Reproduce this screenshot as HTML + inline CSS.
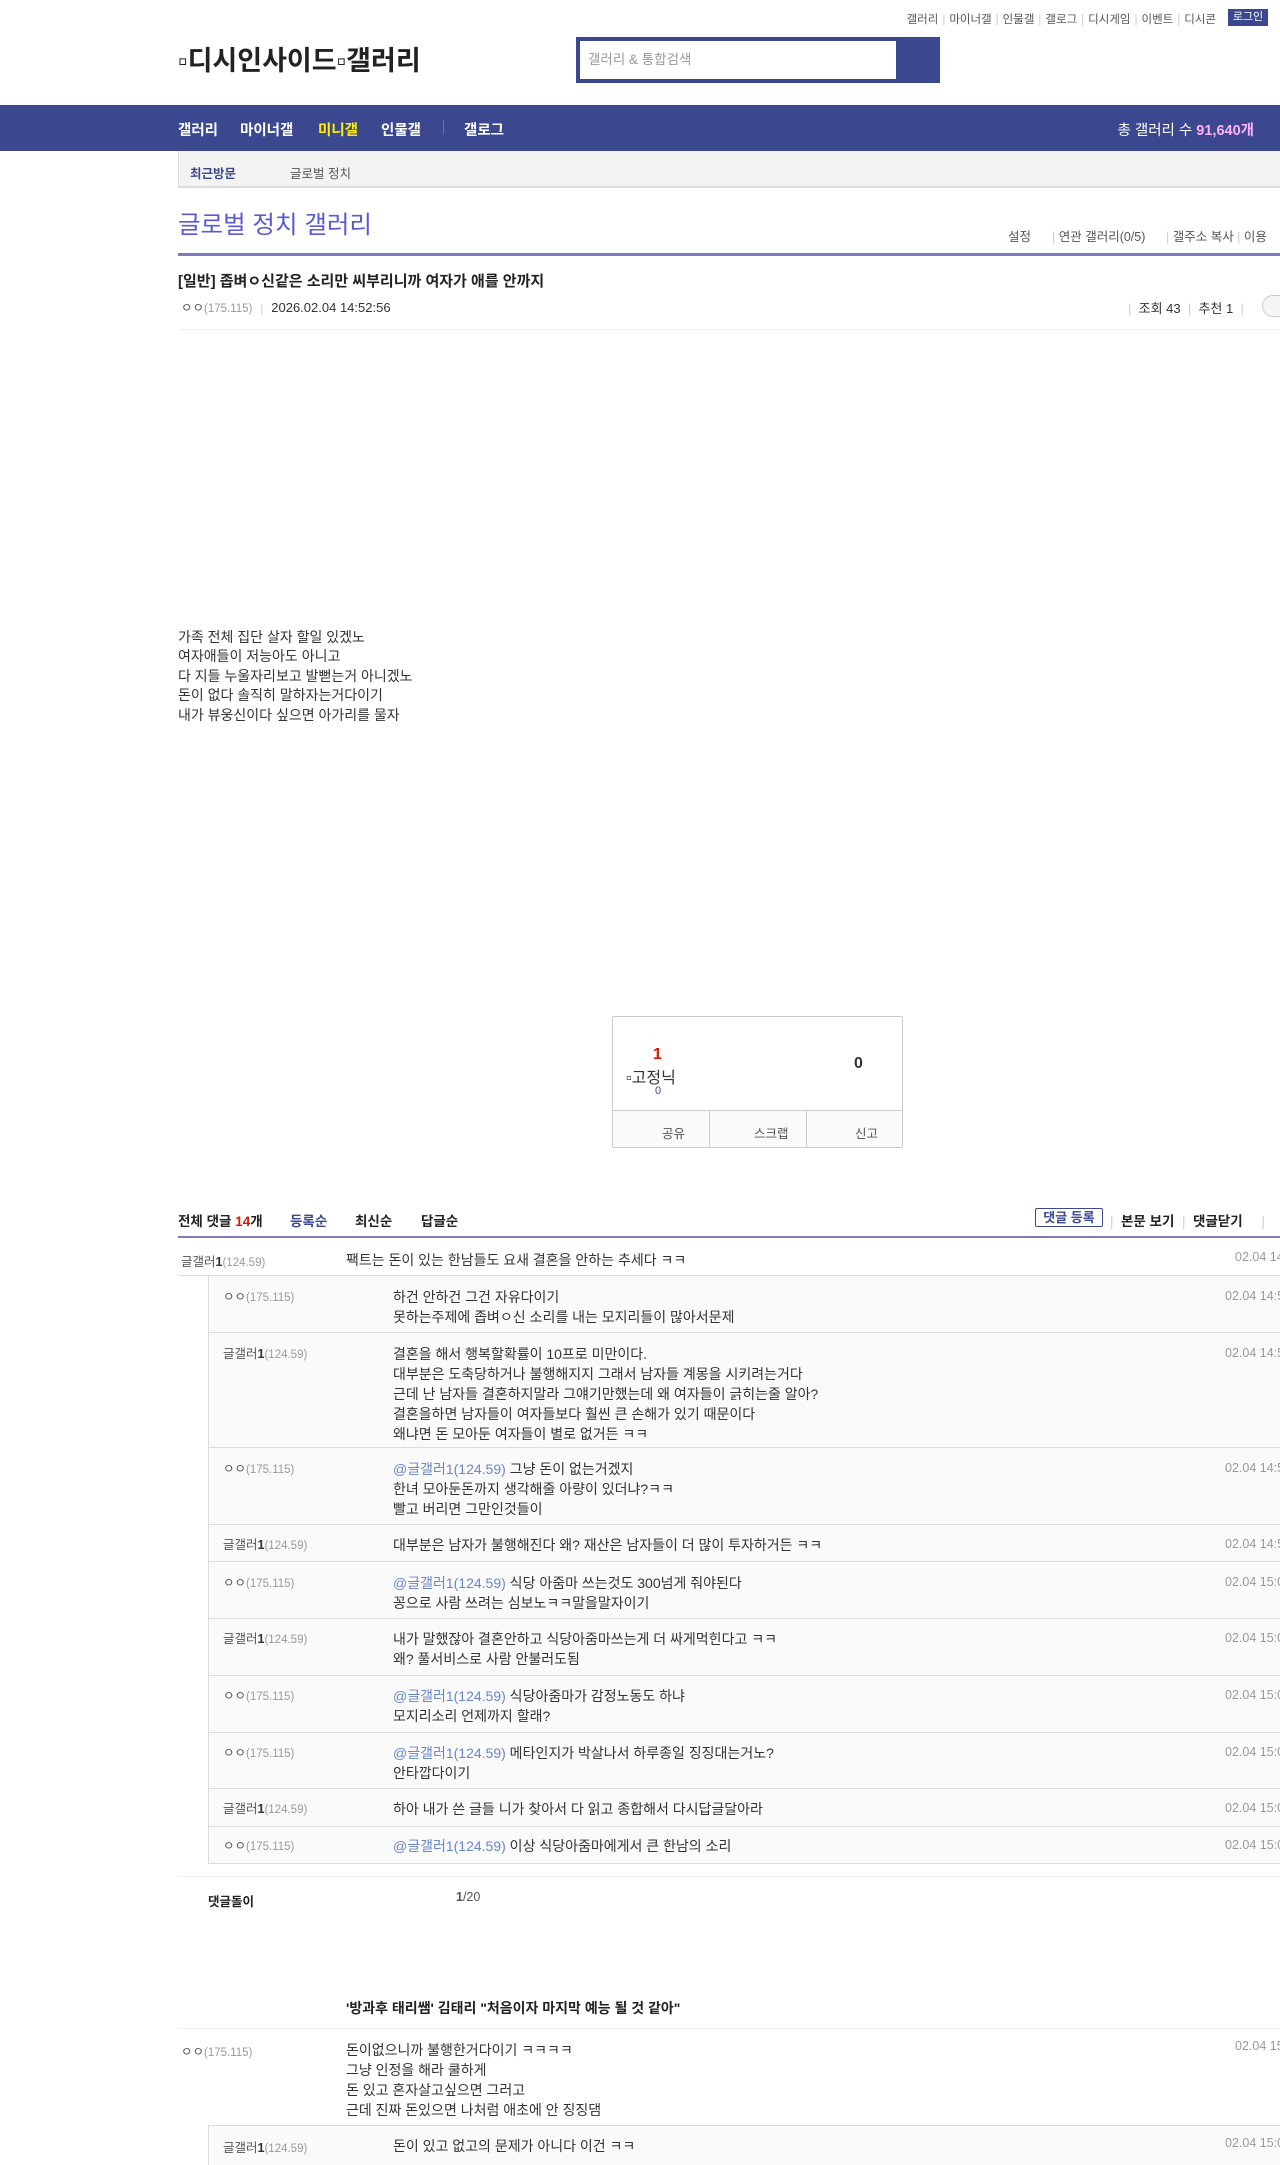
<!DOCTYPE html>
<html><head><meta charset="utf-8"><style>
*{margin:0;padding:0;box-sizing:border-box}
body{width:1280px;height:2158px;overflow:hidden;position:relative;background:#fff;font-family:"Liberation Sans","Noto Sans CJK KR",sans-serif;color:#333;font-size:14px}
.a{position:absolute;white-space:nowrap}
.top{top:11px;font-size:11.5px;color:#555}
.top span.s{color:#ccc;margin:0 4px}
.nav{top:105px;left:0;width:1280px;height:46px;background:#3b4890}
.nav .a{top:14px;font-size:14.5px;font-weight:bold;color:#fff}
.nick{font-size:12.5px;color:#555}
.nick i{font-style:normal;font-size:11.5px;color:#999}
.dt{font-size:12.5px;color:#999}
.rep{position:absolute;left:208px;width:1100px;background:#fafafa;border-top:1px solid #ddd}
.at{color:#6a86c8}
.c{font-size:14px}
</style></head><body>
<div class="a top" style="right:64px">갤러리<span class="s">|</span>마이너갤<span class="s">|</span>인물갤<span class="s">|</span>갤로그<span class="s">|</span>디시게임<span class="s">|</span>이벤트<span class="s">|</span>디시콘</div>
<div class="a" style="left:1228px;top:9px;width:40px;height:17px;background:#3b4890;color:#fff;font-size:11px;text-align:center;line-height:17px">로그인</div>
<div class="a" style="left:178px;top:39px;font-size:27px;font-weight:bold;color:#222">▫디시인사이드▫갤러리</div>
<div class="a" style="left:576px;top:37px;width:364px;height:46px;background:#3b4890"><div style="position:absolute;left:4px;top:4px;width:316px;height:38px;background:#fff;color:#999;font-size:13.5px;line-height:38px;padding-left:8px">갤러리 &amp; 통합검색</div></div>
<div class="a nav">
<div class="a" style="left:178px">갤러리</div><div class="a" style="left:240px">마이너갤</div><div class="a" style="left:318px;color:#fff000">미니갤</div><div class="a" style="left:381px">인물갤</div><div class="a" style="left:443px;top:15px;width:1px;height:14px;background:#6670b0"></div><div class="a" style="left:464px">갤로그</div>
<div class="a" style="right:26px;font-weight:normal;font-size:14.5px">총 갤러리 수 <b style="color:#ffb0ff">91,640개</b></div></div>
<div class="a" style="left:178px;top:151px;width:1102px;height:37px;background:#f3f3f3;border-left:1px solid #ddd;border-bottom:2px solid #ddd"></div>
<div class="a" style="left:190px;top:163px;font-size:12.5px;font-weight:bold;color:#3b4890">최근방문</div>
<div class="a" style="left:290px;top:163px;font-size:12.5px;color:#555">글로벌 정치</div>
<div class="a" style="left:178px;top:206px;font-size:24.5px;color:#5a5ad2">글로벌 정치 갤러리</div>
<div class="a" style="left:1008px;top:226px;font-size:12.5px;color:#555">설정</div>
<div class="a" style="left:1052px;top:226px;font-size:12.5px;color:#555"><span style="color:#ccc">|</span> 연관 갤러리(0/5)</div>
<div class="a" style="left:1166px;top:226px;font-size:12.5px;color:#555"><span style="color:#ccc">|</span> 갤주소 복사 <span style="color:#ccc">|</span> 이용</div>
<div class="a" style="left:178px;top:253px;width:1102px;height:3px;background:#7b7bc2"></div>
<div class="a" style="left:178px;top:270px;font-size:15px;font-weight:bold;color:#222">[일반] 좁벼ㅇ신같은 소리만 씨부리니까 여자가 애를 안까지</div>
<div class="a" style="left:181px;top:297px"><span class="nick">ㅇㅇ<i>(175.115)</i></span><span style="color:#ccc;margin:0 8px;font-size:11px">|</span><span style="font-size:13px;color:#333">2026.02.04 14:52:56</span></div>
<div class="a" style="left:1128px;top:298px;font-size:13px;color:#333"><span style="color:#ccc">|</span>&nbsp; 조회 43 &nbsp;<span style="color:#ccc">|</span>&nbsp; 추천 1 &nbsp;<span style="color:#ccc">|</span></div>
<div class="a" style="left:1262px;top:295px;width:30px;height:22px;border:1px solid #ccc;border-radius:11px;background:#f5f5f5"></div>
<div class="a" style="left:178px;top:329px;width:1102px;height:1px;background:#eee"></div>
<div class="a" style="left:178px;top:628px;font-size:14px;line-height:19.4px;color:#333">가족 전체 집단 살자 할일 있겠노<br>여자애들이 저능아도 아니고<br>다 지들 누울자리보고 발뻗는거 아니겠노<br>돈이 없다 솔직히 말하자는거다이기<br>내가 뷰웅신이다 싶으면 아가리를 물자</div>
<div class="a" style="left:612px;top:1016px;width:291px;height:132px;border:1px solid #ccc;border-radius:2px">
<div class="a" style="left:40px;top:29px;font-size:16px;font-weight:bold;color:#d31900">1</div>
<div class="a" style="left:13px;top:47px;font-size:16px;color:#333">▫고정닉</div>
<div class="a" style="left:42px;top:68px;font-size:11px;color:#3b4890">0</div>
<div class="a" style="left:241px;top:38px;font-size:16px;font-weight:bold;color:#333">0</div>
<div class="a" style="left:0;top:93px;width:289px;height:37px;background:#fafafa;border-top:1px solid #ccc"></div>
<div class="a" style="left:96px;top:94px;width:1px;height:36px;background:#ccc"></div>
<div class="a" style="left:193px;top:94px;width:1px;height:36px;background:#ccc"></div>
<div class="a" style="left:49px;top:106px;font-size:12.5px;color:#555">공유</div>
<div class="a" style="left:141px;top:106px;font-size:12.5px;color:#555">스크랩</div>
<div class="a" style="left:242px;top:106px;font-size:12.5px;color:#555">신고</div>
</div>
<div class="a" style="left:178px;top:1210px;font-size:13.5px;font-weight:bold;color:#222">전체 댓글 <span style="color:#d31900">14</span>개</div>
<div class="a" style="left:290px;top:1210px;font-size:13.5px;font-weight:bold;color:#3b4890">등록순</div>
<div class="a" style="left:355px;top:1210px;font-size:13.5px;font-weight:bold;color:#222">최신순</div>
<div class="a" style="left:421px;top:1210px;font-size:13.5px;font-weight:bold;color:#222">답글순</div>
<div class="a" style="left:1035px;top:1208px;width:68px;height:19px;border:1px solid #3b4890;border-radius:2px;font-size:13px;font-weight:bold;color:#3b4890;text-align:center;line-height:17px">댓글 등록</div>
<div class="a" style="left:1110px;top:1210px;font-size:13.5px;font-weight:bold;color:#222"><span style="color:#ccc;font-weight:normal">|</span>&nbsp; 본문 보기 &nbsp;<span style="color:#ccc;font-weight:normal">|</span>&nbsp; 댓글닫기 &nbsp;&nbsp;&nbsp;&nbsp;<span style="color:#ccc;font-weight:normal">|</span></div>
<div class="a" style="left:178px;top:1236px;width:1102px;height:2px;background:#7b7bc2"></div>

<div class="a nick" style="left:181px;top:1251px">글갤러<b style="color:#333">1</b><i>(124.59)</i></div>
<div class="a c" style="left:346px;top:1250px">팩트는 돈이 있는 한남들도 요새 결혼을 안하는 추세다 ㅋㅋ</div>
<div class="a dt" style="left:1235px;top:1250px">02.04 14:52:00</div>
<div class="a" style="left:178px;top:1275px;width:1102px;height:1px;background:#ddd"></div>

<div class="rep" style="top:1275px;height:588px;border-left:1px solid #ddd"></div>
<div class="a" style="left:208px;top:1332px;width:1072px;height:1px;background:#ddd"></div>
<div class="a" style="left:208px;top:1447px;width:1072px;height:1px;background:#ddd"></div>
<div class="a" style="left:208px;top:1524px;width:1072px;height:1px;background:#ddd"></div>
<div class="a" style="left:208px;top:1561px;width:1072px;height:1px;background:#ddd"></div>
<div class="a" style="left:208px;top:1618px;width:1072px;height:1px;background:#ddd"></div>
<div class="a" style="left:208px;top:1675px;width:1072px;height:1px;background:#ddd"></div>
<div class="a" style="left:208px;top:1732px;width:1072px;height:1px;background:#ddd"></div>
<div class="a" style="left:208px;top:1788px;width:1072px;height:1px;background:#ddd"></div>
<div class="a" style="left:208px;top:1826px;width:1072px;height:1px;background:#ddd"></div>
<div class="a" style="left:208px;top:1863px;width:1072px;height:1px;background:#ddd"></div>

<div style="position:absolute;left:0;top:2px;line-height:20px;font-size:14px">
<div class="a nick" style="left:223px;top:1285px">ㅇㅇ<i>(175.115)</i></div>
<div class="a" style="left:393px;top:1285px">하건 안하건 그건 자유다이기<br>못하는주제에 좁벼ㅇ신 소리를 내는 모지리들이 많아서문제</div>
<div class="a dt" style="left:1225px;top:1284px">02.04 14:53:00</div>

<div class="a nick" style="left:223px;top:1342px">글갤러<b style="color:#333">1</b><i>(124.59)</i></div>
<div class="a" style="left:393px;top:1342px">결혼을 해서 행복할확률이 10프로 미만이다.<br>대부분은 도축당하거나 불행해지지 그래서 남자들 계몽을 시키려는거다<br>근데 난 남자들 결혼하지말라 그얘기만했는데 왜 여자들이 긁히는줄 알아?<br>결혼을하면 남자들이 여자들보다 훨씬 큰 손해가 있기 때문이다<br>왜냐면 돈 모아둔 여자들이 별로 없거든 ㅋㅋ</div>
<div class="a dt" style="left:1225px;top:1341px">02.04 14:54:00</div>

<div class="a nick" style="left:223px;top:1457px">ㅇㅇ<i>(175.115)</i></div>
<div class="a" style="left:393px;top:1457px"><span class="at">@글갤러1(124.59)</span> 그냥 돈이 없는거겠지<br>한녀 모아둔돈까지 생각해줄 아량이 있더냐?ㅋㅋ<br>빨고 버리면 그만인것들이</div>
<div class="a dt" style="left:1225px;top:1456px">02.04 14:55:00</div>

<div class="a nick" style="left:223px;top:1533px">글갤러<b style="color:#333">1</b><i>(124.59)</i></div>
<div class="a" style="left:393px;top:1533px">대부분은 남자가 불행해진다 왜? 재산은 남자들이 더 많이 투자하거든 ㅋㅋ</div>
<div class="a dt" style="left:1225px;top:1532px">02.04 14:56:00</div>

<div class="a nick" style="left:223px;top:1571px">ㅇㅇ<i>(175.115)</i></div>
<div class="a" style="left:393px;top:1571px"><span class="at">@글갤러1(124.59)</span> 식당 아줌마 쓰는것도 300넘게 줘야된다<br>꽁으로 사람 쓰려는 심보노ㅋㅋ말을말자이기</div>
<div class="a dt" style="left:1225px;top:1570px">02.04 15:00:00</div>

<div class="a nick" style="left:223px;top:1627px">글갤러<b style="color:#333">1</b><i>(124.59)</i></div>
<div class="a" style="left:393px;top:1627px">내가 말했잖아 결혼안하고 식당아줌마쓰는게 더 싸게먹힌다고 ㅋㅋ<br>왜? 풀서비스로 사람 안불러도됨</div>
<div class="a dt" style="left:1225px;top:1626px">02.04 15:01:00</div>

<div class="a nick" style="left:223px;top:1684px">ㅇㅇ<i>(175.115)</i></div>
<div class="a" style="left:393px;top:1684px"><span class="at">@글갤러1(124.59)</span> 식당아줌마가 감정노동도 하냐<br>모지리소리 언제까지 할래?</div>
<div class="a dt" style="left:1225px;top:1683px">02.04 15:02:00</div>

<div class="a nick" style="left:223px;top:1741px">ㅇㅇ<i>(175.115)</i></div>
<div class="a" style="left:393px;top:1741px"><span class="at">@글갤러1(124.59)</span> 메타인지가 박살나서 하루종일 징징대는거노?<br>안타깝다이기</div>
<div class="a dt" style="left:1225px;top:1740px">02.04 15:03:00</div>

<div class="a nick" style="left:223px;top:1797px">글갤러<b style="color:#333">1</b><i>(124.59)</i></div>
<div class="a" style="left:393px;top:1797px">하아 내가 쓴 글들 니가 찾아서 다 읽고 종합해서 다시답글달아라</div>
<div class="a dt" style="left:1225px;top:1796px">02.04 15:04:00</div>

<div class="a nick" style="left:223px;top:1834px">ㅇㅇ<i>(175.115)</i></div>
<div class="a" style="left:393px;top:1834px"><span class="at">@글갤러1(124.59)</span> 이상 식당아줌마에게서 큰 한남의 소리</div>
<div class="a dt" style="left:1225px;top:1833px">02.04 15:05:00</div>
</div>

<div class="a" style="left:178px;top:1876px;width:1102px;height:1px;background:#eee"></div>
<div class="a" style="left:208px;top:1891px;font-size:12.5px;font-weight:bold;color:#222">댓글돌이</div>
<div class="a" style="left:456px;top:1890px;font-size:12.5px;color:#555"><b>1</b>/20</div>
<div class="a" style="left:346px;top:1998px;font-size:14px;font-weight:bold;color:#222">'방과후 태리쌤' 김태리 "처음이자 마지막 예능 될 것 같아"</div>
<div class="a" style="left:178px;top:2028px;width:1102px;height:1px;background:#eee"></div>
<div class="a nick" style="left:181px;top:2041px">ㅇㅇ<i>(175.115)</i></div>
<div class="a" style="left:346px;top:2040px;line-height:20px;font-size:14px">돈이없으니까 불행한거다이기 ㅋㅋㅋㅋ<br>그냥 인정을 해라 쿨하게<br>돈 있고 혼자살고싶으면 그러고<br>근데 진짜 돈있으면 나처럼 애초에 안 징징댐</div>
<div class="a dt" style="left:1235px;top:2039px">02.04 15:06:00</div>
<div class="rep" style="top:2125px;height:40px;border-left:1px solid #ddd"></div>
<div class="a nick" style="left:223px;top:2137px">글갤러<b style="color:#333">1</b><i>(124.59)</i></div>
<div class="a c" style="left:393px;top:2136px">돈이 있고 없고의 문제가 아니다 이건 ㅋㅋ</div>
<div class="a dt" style="left:1225px;top:2136px">02.04 15:07:00</div>
</body></html>
